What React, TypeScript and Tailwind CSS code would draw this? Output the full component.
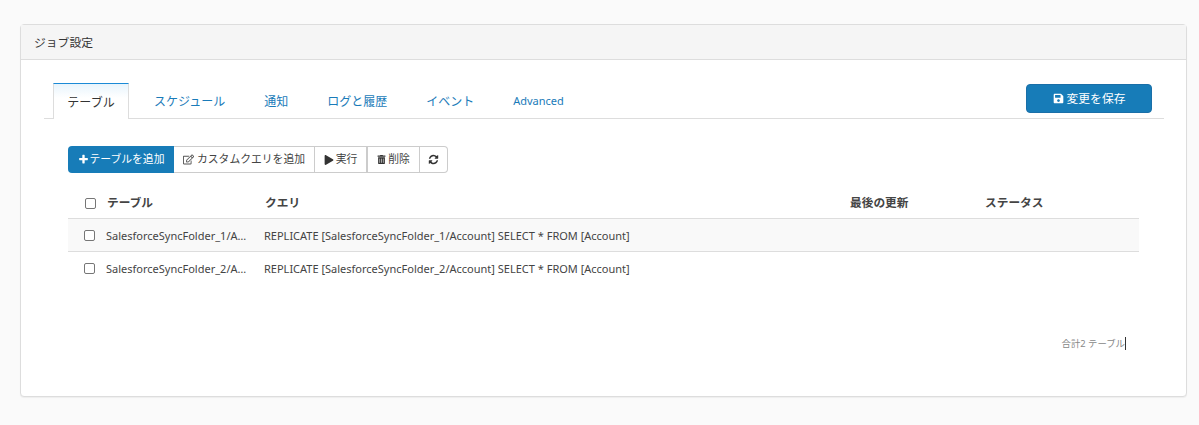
import { FaRegEdit, FaPlay, FaTrashAlt, FaSave } from "react-icons/fa";

const font = { fontFamily: '"Noto Sans", "Noto Sans CJK JP", sans-serif' };

const tabs = ["スケジュール", "通知", "ログと履歴", "イベント"];
const rows = [
  ["SalesforceSyncFolder_1/Account", "REPLICATE [SalesforceSyncFolder_1/Account] SELECT * FROM [Account]"],
  ["SalesforceSyncFolder_2/Account", "REPLICATE [SalesforceSyncFolder_2/Account] SELECT * FROM [Account]"],
];

function Box() {
  return <span className="block h-[11px] w-[11px] rounded-[2px] border border-[#767676] bg-white" />;
}

function PlusIcon() {
  return (
    <svg viewBox="0 0 1792 1792" className="h-[11px] w-[11px]" fill="currentColor">
      <path d="M1600 736v192q0 40-28 68t-68 28h-416v416q0 40-28 68t-68 28h-192q-40 0-68-28t-28-68v-416h-416q-40 0-68-28t-28-68v-192q0-40 28-68t68-28h416v-416q0-40 28-68t68-28h192q40 0 68 28t28 68v416h416q40 0 68 28t28 68z" />
    </svg>
  );
}

function RefreshIcon() {
  return (
    <svg viewBox="0 0 1792 1792" className="h-[11px] w-[11px]" fill="currentColor">
      <path d="M1639 1056q0 5-1 7-64 268-268 434.5t-478 166.5q-146 0-282.5-55t-243.5-157l-129 129q-19 19-45 19t-45-19-19-45v-448q0-26 19-45t45-19h448q26 0 45 19t19 45-19 45l-137 137q71 66 161 102t187 36q134 0 250-65t186-179q11-17 53-117 8-23 30-23h192q13 0 22.5 9.5t9.5 22.5zm25-800v448q0 26-19 45t-45 19h-448q-26 0-45-19t-19-45 19-45l138-138q-148-137-349-137-134 0-250 65t-186 179q-11 17-53 117-8 23-30 23h-199q-13 0-22.5-9.5t-9.5-22.5v-7q65-268 270-434.5t480-166.5q146 0 284 55.5t245 156.5l130-129q19-19 45-19t45 19 19 45z" />
    </svg>
  );
}

export default function App() {
  return (
    <div className="h-[425px] w-[1199px] overflow-hidden bg-[#fafafa] px-5 pt-6 text-[#444]" style={font}>
      <div className="h-[373px] w-[1167px] rounded border border-[#ddd] bg-white shadow-[0_1px_1px_rgba(0,0,0,0.05)]">
        <div className="flex h-[35px] items-center border-b border-[#ddd] bg-[#f5f5f5] px-[13px] pt-px text-[11.8px] text-[#333]">
          ジョブ設定
        </div>
        <div className="pl-[23px] pr-[22px] pt-[22px]">
          <div className="flex h-[37px] items-stretch border-b border-[#ddd]">
            <div className="relative top-px ml-[9px] flex w-[76px] items-center justify-center border border-b-0 border-[#ddd] border-t-[#1b8ad6] bg-gradient-to-b from-[#e8f4fc] to-white to-40% pt-[3px] text-[12px] text-[#333]">
              テーブル
            </div>
            <div className="ml-[25px] flex items-center gap-[39px] pt-[3px] text-[12px] text-[#1a7bb9]">
              {tabs.map((t) => (
                <span key={t}>{t}</span>
              ))}
              <span className="text-[11px]">Advanced</span>
            </div>
            <button className="ml-auto mr-[12px] mt-[2px] flex h-[29px] w-[126px] items-center justify-center gap-[3px] rounded-[4px] border border-[#1a6fa8] bg-[#177cb8] text-[11.8px] text-white">
              <FaSave className="h-[11px] w-[11px]" />
              変更を保存
            </button>
          </div>

          <div className="ml-[24px] mt-[27px] flex h-[27px] w-[380px] text-[10.8px]">
            <button className="flex w-[106px] items-center justify-center gap-[1px] rounded-l-[4px] bg-[#177cb8] text-white">
              <PlusIcon />
              テーブルを追加
            </button>
            <button className="flex w-[141px] items-center justify-center gap-[3px] border-y border-r border-[#ccc] bg-white">
              <FaRegEdit className="h-[11px] w-[11px] text-[#555]" />
              カスタムクエリを追加
            </button>
            <button className="flex w-[52px] items-center justify-center gap-[2px] border-y border-r border-[#ccc] bg-white">
              <FaPlay className="h-[10px] w-[10px] text-[#333]" />
              実行
            </button>
            <button className="flex w-[53px] items-center justify-center gap-[2px] border-y border-x border-[#ccc] bg-white">
              <FaTrashAlt className="h-[9px] w-[9px] text-[#333]" />
              削除
            </button>
            <button className="flex w-[28px] items-center justify-center rounded-r-[4px] border-y border-r border-[#ccc] bg-white text-[#333]">
              <RefreshIcon />
            </button>
          </div>

          <div className="ml-[24px] mt-[15px] w-[1071px]">
            <div className="flex h-[31px] items-center border-b border-[#ddd] text-[11.7px] font-bold">
              <div className="flex w-[39px] justify-end pr-[11px]"><Box /></div>
              <div className="w-[158px]">テーブル</div>
              <div className="w-[585px]">クエリ</div>
              <div className="w-[135px]">最後の更新</div>
              <div>ステータス</div>
            </div>
            {rows.map(([name, query], i) => (
              <div
                key={name}
                className={`flex h-[33px] items-center border-b pt-px text-[11px] ${
                  i === 0 ? "border-[#ddd] bg-[#f9f9f9]" : "border-transparent"
                }`}
              >
                <div className="flex w-[38px] justify-end pr-[11px]"><Box /></div>
                <div className="w-[143px] overflow-hidden text-ellipsis whitespace-nowrap pt-px">{name}</div>
                <div className="ml-[15px] pt-px">{query}</div>
              </div>
            ))}
          </div>

          <div className="mr-[38px] mt-[52px] flex justify-end text-[9.4px] text-[#888]">
            <span className="border-r border-[#333] leading-[13px]">合計2 テーブル</span>
          </div>
        </div>
      </div>
    </div>
  );
}
